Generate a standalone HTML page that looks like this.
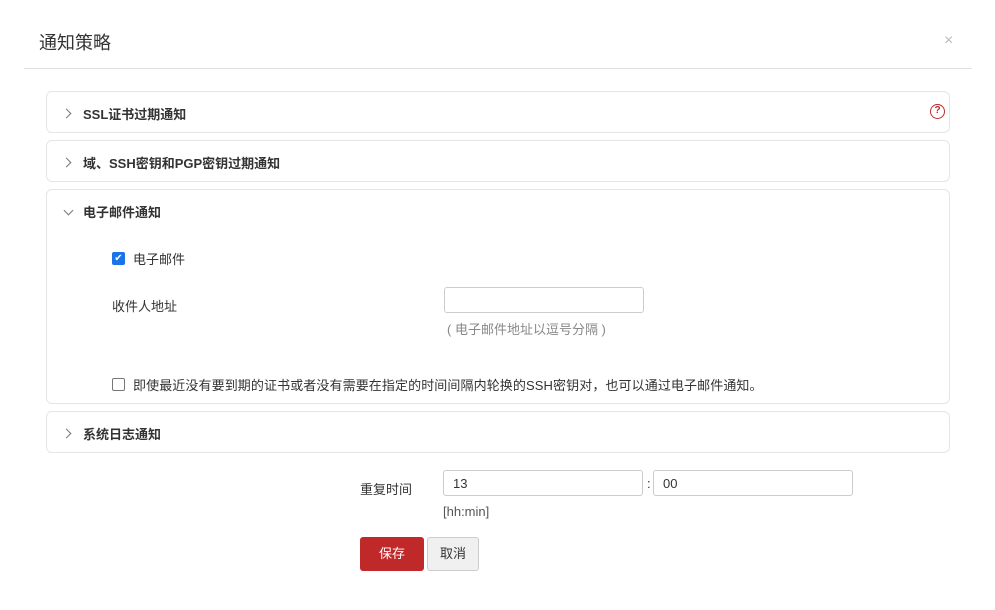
<!DOCTYPE html>
<html><head><meta charset="utf-8"><style>
*{box-sizing:border-box;margin:0;padding:0}
body{width:995px;height:610px;background:#fff;font-family:"Liberation Sans","Noto Sans CJK SC",sans-serif;color:#333;font-size:13px;position:relative;overflow:hidden}
.a{position:absolute}
.panel{position:absolute;left:46px;width:904px;border:1px solid #e5e5e5;border-radius:6px}
.t{position:absolute;left:36px;font-weight:bold;font-size:13px;color:#333}
.chev{position:absolute;left:16px;width:7px;height:7px;border-right:1.3px solid #777;border-bottom:1.3px solid #777}
.inp{position:absolute;border:1px solid #ccc;border-radius:3px;height:26px;font-size:13px;padding:5px 9px;color:#333}
.cb{position:absolute;width:13px;height:13px;border:1px solid #777;border-radius:2px;background:#fff}
</style></head><body>
<div class="a" style="left:39px;top:29px;font-size:18px;color:#333">通知策略</div>
<div class="a" style="left:944px;top:32px;font-size:16px;color:#bbb">×</div>
<div class="a" style="left:24px;top:68px;width:948px;height:1px;background:#e0e0e0"></div>

<div class="panel" style="top:91px;height:42px">
<div class="chev" style="top:18px;transform:rotate(-45deg)"></div>
<div class="t" style="top:12px">SSL证书过期通知</div>
<div class="a" style="left:883px;top:12px;width:15px;height:15px;border:1.5px solid #c0292a;border-radius:50%;color:#c0292a;font-size:10px;font-weight:bold;text-align:center;line-height:12px">?</div>
</div>
<div class="panel" style="top:140px;height:42px">
<div class="chev" style="top:18px;transform:rotate(-45deg)"></div>
<div class="t" style="top:12px">域、SSH密钥和PGP密钥过期通知</div>
</div>
<div class="panel" style="top:189px;height:215px">
<div class="chev" style="top:17px;left:18px;transform:rotate(45deg)"></div>
<div class="t" style="top:12px">电子邮件通知</div>
<div class="cb" style="left:65px;top:62px;background:#1a73e8;border-color:#1a73e8;color:#fff;font-size:10px;line-height:11px;text-align:center">✔</div>
<div class="a" style="left:86px;top:59px">电子邮件</div>
<div class="a" style="left:65px;top:106px">收件人地址</div>
<div class="inp" style="left:397px;top:97px;width:200px"></div>
<div class="a" style="left:400px;top:129px;color:#888">( 电子邮件地址以逗号分隔 )</div>
<div class="cb" style="left:65px;top:188px"></div>
<div class="a" style="left:86px;top:185px;font-size:13px;letter-spacing:0.1px">即使最近没有要到期的证书或者没有需要在指定的时间间隔内轮换的SSH密钥对，也可以通过电子邮件通知。</div>
</div>
<div class="panel" style="top:411px;height:42px">
<div class="chev" style="top:18px;transform:rotate(-45deg)"></div>
<div class="t" style="top:12px">系统日志通知</div>
</div>

<div class="a" style="left:360px;top:479px">重复时间</div>
<div class="inp" style="left:443px;top:470px;width:200px">13</div>
<div class="a" style="left:647px;top:476px">:</div>
<div class="inp" style="left:653px;top:470px;width:200px">00</div>
<div class="a" style="left:443px;top:504px;color:#555">[hh:min]</div>
<div class="a" style="left:360px;top:537px;width:64px;height:34px;background:#c0292a;border-radius:3px;color:#fff;text-align:center;line-height:34px">保存</div>
<div class="a" style="left:427px;top:537px;width:52px;height:34px;background:#f0f0f0;border:1px solid #ccc;border-radius:3px;text-align:center;line-height:32px">取消</div>
</body></html>
